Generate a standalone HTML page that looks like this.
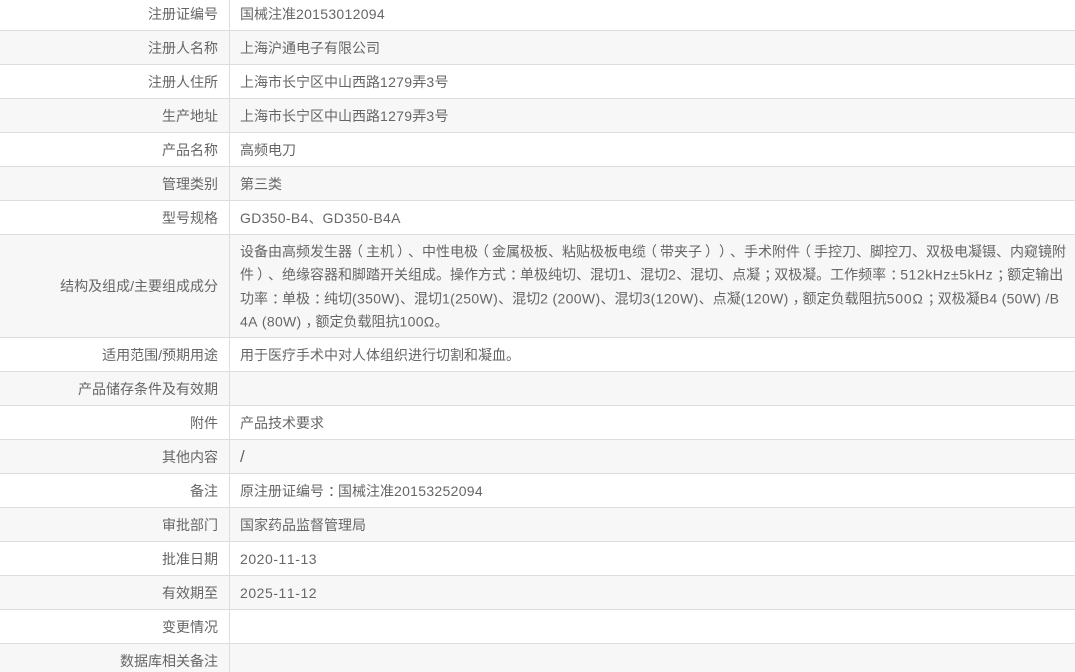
<!DOCTYPE html>
<html lang="zh-CN">
<head>
<meta charset="utf-8">
<style>
html,body{margin:0;padding:0;width:1075px;height:672px;overflow:hidden;background:#fff}
body{position:relative;font-family:"Liberation Sans","Noto Sans CJK SC",sans-serif;font-size:14px;color:#666;text-spacing-trim:space-all;font-kerning:none}
.r{position:absolute;left:0;width:1075px;border-bottom:1px solid #ddd;box-sizing:content-box}
.g{background:#f7f7f7}
.l{position:absolute;left:0;top:0;bottom:0;width:229px;border-right:1px solid #ddd;box-sizing:content-box}
.l span{position:absolute;right:11px;top:50%;transform:translateY(-50%);white-space:nowrap;line-height:20px}
.v{position:absolute;left:240px;top:50%;transform:translateY(-50%);white-space:nowrap;line-height:34px}
.v.m{line-height:23.33px;margin-top:1px}
i{font-style:normal;letter-spacing:.3px}
i.d{letter-spacing:.55px}
i.t{letter-spacing:.35px}
i.w{letter-spacing:.8px}
b{font-weight:normal;position:relative}
b.c{left:4px}
b.o{left:-3px}
b.e{left:3px}
.s{font-size:17px}
</style>
</head>
<body>
<div class="r" style="top:-3px;height:33px"><div class="l"><span>注册证编号</span></div><div class="v">国械注准<i>20153012094</i></div></div>
<div class="r g" style="top:31px;height:33px"><div class="l"><span>注册人名称</span></div><div class="v">上海沪通电子有限公司</div></div>
<div class="r" style="top:65px;height:33px"><div class="l"><span>注册人住所</span></div><div class="v">上海市长宁区中山西路<i>1279</i>弄<i>3</i>号</div></div>
<div class="r g" style="top:99px;height:33px"><div class="l"><span>生产地址</span></div><div class="v">上海市长宁区中山西路<i>1279</i>弄<i>3</i>号</div></div>
<div class="r" style="top:133px;height:33px"><div class="l"><span>产品名称</span></div><div class="v">高频电刀</div></div>
<div class="r g" style="top:167px;height:33px"><div class="l"><span>管理类别</span></div><div class="v">第三类</div></div>
<div class="r" style="top:201px;height:33px"><div class="l"><span>型号规格</span></div><div class="v"><i>GD350-B4</i>、<i>GD350-B4A</i></div></div>
<div class="r g" style="top:235px;height:102px"><div class="l"><span>结构及组成/主要组成成分</span></div><div class="v m">设备由高频发生器<b class="o">（</b>主机<b class="e">）</b>、中性电极<b class="o">（</b>金属极板、粘贴极板电缆<b class="o">（</b>带夹子<b class="e">）</b><b class="e">）</b>、手术附件<b class="o">（</b>手控刀、脚控刀、双极电凝镊、内窥镜附<br>件<b class="e">）</b>、绝缘容器和脚踏开关组成。操作方式<b class="c">：</b>单极纯切、混切<i>1</i>、混切<i>2</i>、混切、点凝<b class="c">；</b>双极凝。工作频率<b class="c">：</b><i class="d">512kHz±5kHz</i><b class="c">；</b>额定输出<br>功率<b class="c">：</b>单极<b class="c">：</b>纯切<i class="t">(350W)</i>、混切<i class="t">1(250W)</i>、混切<i class="t">2 (200W)</i>、混切<i class="t">3(120W)</i>、点凝<i class="t">(120W)</i><b class="c">，</b>额定负载阻抗<i class="w">500Ω</i><b class="c">；</b>双极凝<i>B4 (50W) /B</i><br><i>4A (80W)</i><b class="c">，</b>额定负载阻抗<i>100Ω</i>。</div></div>
<div class="r" style="top:338px;height:33px"><div class="l"><span>适用范围/预期用途</span></div><div class="v">用于医疗手术中对人体组织进行切割和凝血。</div></div>
<div class="r g" style="top:372px;height:33px"><div class="l"><span>产品储存条件及有效期</span></div></div>
<div class="r" style="top:406px;height:33px"><div class="l"><span>附件</span></div><div class="v">产品技术要求</div></div>
<div class="r g" style="top:440px;height:33px"><div class="l"><span>其他内容</span></div><div class="v"><span class="s">/</span></div></div>
<div class="r" style="top:474px;height:33px"><div class="l"><span>备注</span></div><div class="v">原注册证编号<b class="c">：</b>国械注准<i>20153252094</i></div></div>
<div class="r g" style="top:508px;height:33px"><div class="l"><span>审批部门</span></div><div class="v">国家药品监督管理局</div></div>
<div class="r" style="top:542px;height:33px"><div class="l"><span>批准日期</span></div><div class="v"><i class="d">2020-11-13</i></div></div>
<div class="r g" style="top:576px;height:33px"><div class="l"><span>有效期至</span></div><div class="v"><i class="d">2025-11-12</i></div></div>
<div class="r" style="top:610px;height:33px"><div class="l"><span>变更情况</span></div></div>
<div class="r g" style="top:644px;height:33px"><div class="l"><span>数据库相关备注</span></div></div>
</body>
</html>
